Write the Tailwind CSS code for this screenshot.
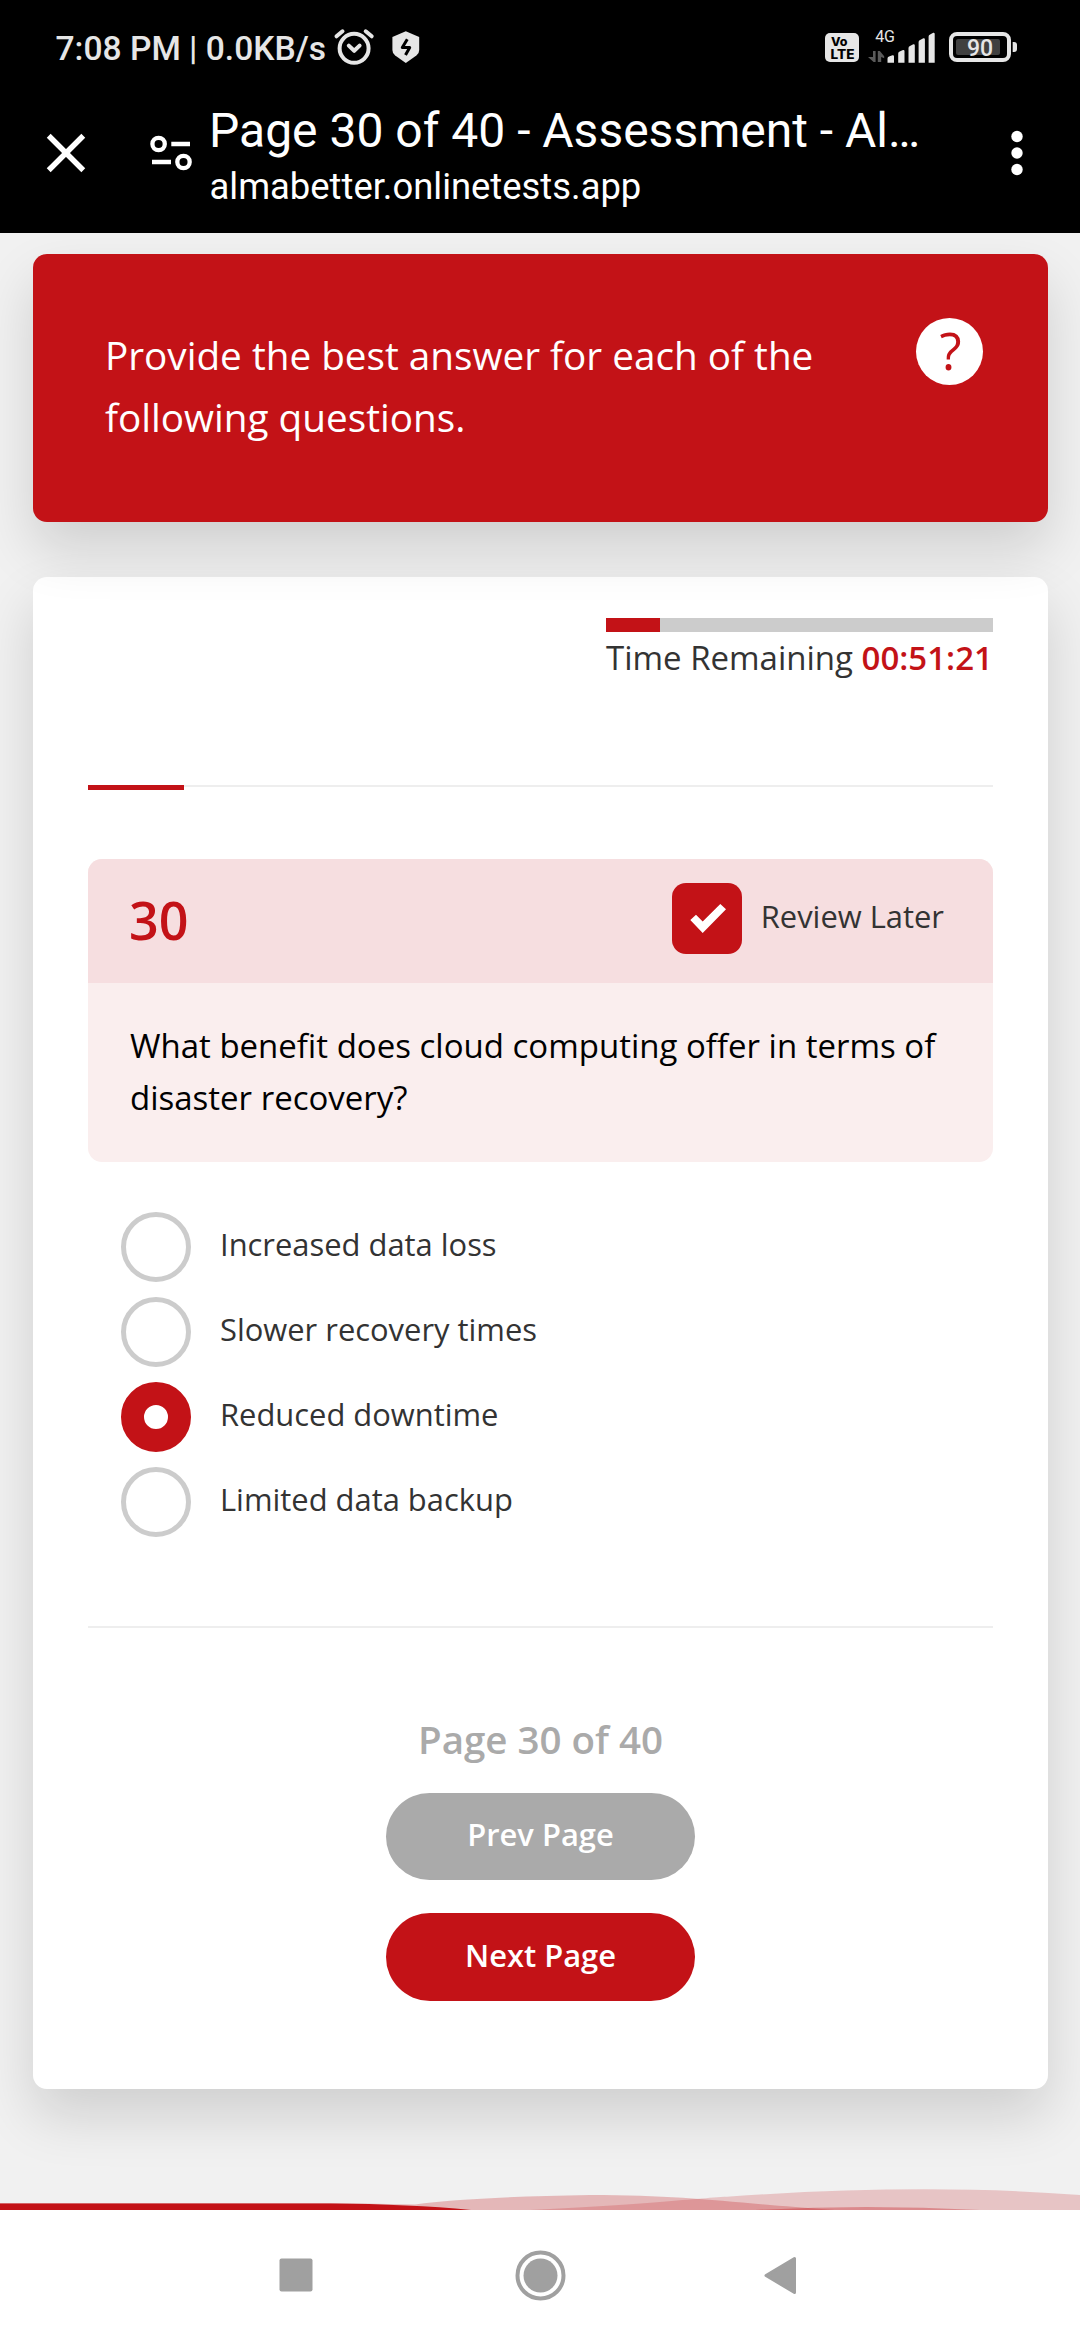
<!DOCTYPE html>
<html lang="en">
<head>
<meta charset="utf-8">
<title>Page 30 of 40 - Assessment</title>
<script src="https://cdn.jsdelivr.net/npm/@tailwindcss/browser@4"></script>
</head>
<body class="w-[1080px] h-[2340px] overflow-hidden flex flex-col bg-[#f1f1f1] font-['Open_Sans',sans-serif] text-[#333]">

<header class="relative z-20 shrink-0 h-[233px] bg-black text-white font-['Roboto',sans-serif]">
  <!-- status bar -->
  <div class="h-[97px] flex items-start justify-between pl-[55.5px] pr-[63px] text-[#e6e6e6]">
    <div class="flex items-start">
      <span class="w-[277px] text-[33.6px] leading-[97px] font-medium whitespace-nowrap">7:08 PM | 0.0KB/s</span>
      <svg class="mt-[28px]" width="42" height="40" viewBox="332.5 28 42 40" fill="none" stroke="#e6e6e6" stroke-width="4" stroke-linecap="round" stroke-linejoin="round">
        <circle cx="353.6" cy="48.3" r="14.5"/>
        <path d="M348.3 45.6l5.4 5.2 5.4-5.2M336 36.3l6-5M371.2 36.3l-6-5"/>
      </svg>
      <svg class="mt-[28px] ml-[16px]" width="30" height="38" viewBox="390.5 28 30 38">
        <path d="M405.3 31.3l13.4 5.7v13q0 3.6-2.8 5.6l-10.6 7.4-10.6-7.4q-2.8-2-2.8-5.6V37z" fill="#e6e6e6"/>
        <path d="M406.8 39.2l-5 8.3h7.4l-4.2 7.6" fill="none" stroke="#000" stroke-width="3" stroke-linejoin="round"/>
      </svg>
    </div>
    <div class="flex items-start">
      <svg class="mt-[28px]" width="34" height="38" viewBox="825 28 34 38">
        <rect x="825" y="33" width="34" height="29" rx="5" fill="#e6e6e6"/>
        <text x="831" y="45.7" font-family="Inter" font-weight="800" font-size="12" textLength="16.5" lengthAdjust="spacingAndGlyphs">Vo</text>
        <text x="830.5" y="58.8" font-family="Inter" font-weight="800" font-size="13" textLength="24" lengthAdjust="spacingAndGlyphs">LTE</text>
      </svg>
      <svg class="mt-[28px] ml-[9px]" width="68" height="38" viewBox="868 28 68 38" fill="#e6e6e6">
        <text x="875.3" y="41.8" font-size="16" textLength="19.5">4G</text>
        <path d="M873 51h2.6v11h-2L868 57h5zM877.8 62V51h2l4.4 5.2v2l-3-1.2V62z" fill="#5a5a5a"/>
        <path d="M887.5 62.7V58.5q0-1.5 1.5-2l3.5-1.3q1.5-.3 1.5 1.3v6.200zM898.200 62.700V53.500q0-1.500 1.500-2l3.300-1.500q1.500-.3 1.500 1.300v11.400zM908.500 62.700V48q0-1.500 1.500-2l3.300-1.700q1.500-.3 1.500 1.300v17.100zM918.600 62.700V42q0-1.500 1.500-2l3.300-1.700q1.500-.3 1.500 1.300v23.100zM928.600 62.700V36.500q0-1.500 1.500-2l3.100-1.700q1.500-.3 1.500 1.300v28.600z"/>
      </svg>
      <svg class="mt-[28px] ml-[13px]" width="68" height="38" viewBox="949 28 68 38">
        <rect x="951" y="34" width="58" height="26" rx="6" fill="none" stroke="#e6e6e6" stroke-width="4"/>
        <rect x="956" y="39" width="44" height="16" rx="2" fill="#404040"/>
        <path d="M1012.700 42h1.300q3 0 3 3v4q0 3-3 3h-1.300z" fill="#e6e6e6"/>
        <text x="967" y="56" font-size="23" font-weight="500" fill="#e6e6e6" textLength="26">90</text>
      </svg>
    </div>
  </div>
  <!-- browser toolbar -->
  <div class="flex items-start pt-[6px]">
    <svg class="mt-[30px] ml-[46px]" width="40" height="40" viewBox="46 133 40 40" stroke="#fff" stroke-width="5.500"><path d="M48.700 135.700l34.600 34.600M83.300 135.700l-34.600 34.600"/></svg>
    <svg class="mt-[30px] ml-[64px]" width="43" height="40" viewBox="150 133 43 40" fill="none" stroke="#fff" stroke-width="4.300">
      <circle cx="158.600" cy="144" r="6.200"/><circle cx="183.500" cy="162" r="6.200"/>
      <path d="M171.300 144H190M152 162h19"/>
    </svg>
    <div class="ml-[16px] w-[800px]">
      <div class="text-[48px] leading-[56px] whitespace-nowrap">Page 30 of 40 - Assessment - Al…</div>
      <div class="mt-[7px] ml-[0.5px] text-[36.400px] leading-[42px]">almabetter.onlinetests.app</div>
    </div>
    <svg class="mt-[26px] ml-[2px]" width="12" height="48" viewBox="0 0 12 48" fill="#fff"><circle cx="6" cy="7.500" r="5.700"/><circle cx="6" cy="24" r="5.700"/><circle cx="6" cy="40.500" r="5.700"/></svg>
  </div>
</header>

<main class="relative shrink-0 h-[1977px] overflow-hidden px-[33px] pt-[21px]">
  <section class="relative z-10 w-[1015px] h-[268px] rounded-[14px] bg-[#c31217] text-white flex items-start justify-between pl-[72px] pr-[65px] shadow-[0_27px_55px_rgba(0,0,0,0.14)]">
    <p class="mt-[70px] w-[740px] text-[38.700px] leading-[62px]">Provide the best answer for each of the following questions.</p>
    <div class="mt-[64px] size-[67px] rounded-full bg-white text-[#c31217] text-center text-[51px] leading-[64px] pl-[2px]">?</div>
  </section>

  <section class="mt-[55px] w-[1015px] h-[1512px] rounded-[14px] bg-white px-[55px] shadow-[0_27px_55px_rgba(0,0,0,0.14)] flex flex-col">
    <div class="self-end mt-[41px] w-[387px]">
      <div class="h-[14px] bg-[#ccc]"><div class="h-full w-[54px] bg-[#c31217]"></div></div>
      <div class="mt-[3px] text-[33px] leading-[45px] whitespace-nowrap">Time Remaining <span class="font-semibold text-[#c31217]">00:51:21</span></div>
    </div>
    <div class="mt-[105px] h-[5px]">
      <div class="h-[2px] bg-[#eee]"><div class="h-[5px] w-[96px] bg-[#c31217]"></div></div>
    </div>

    <div class="mt-[69px] h-[303px] rounded-[14px] overflow-hidden bg-[#faeeee]">
      <div class="h-[124px] bg-[#f6dee0] flex items-start justify-between pl-[41px] pr-[49px]">
        <div class="mt-[31px] text-[52px] leading-[60px] font-semibold text-[#c31217]">30</div>
        <div class="mt-[24px] flex items-start">
          <div class="w-[70px] h-[71px] rounded-[14px] bg-[#c31217]">
            <svg width="70" height="71" viewBox="0 0 70 71"><path d="M18.300 37l5.700-5.200 6.700 6.700L48.300 21l5.700 5.300L30.700 50z" fill="#fff"/></svg>
          </div>
          <span class="ml-[19px] text-[30.900px] leading-[66px]">Review Later</span>
        </div>
      </div>
      <p class="pt-[37px] pl-[42px] w-[870px] text-[33px] leading-[52px] text-black">What benefit does cloud computing offer in terms of disaster recovery?</p>
    </div>

    <div class="mt-[50px] pl-[33px] flex flex-col gap-[15px] text-[30.900px] leading-[64px]">
      <label class="h-[70px] flex items-start gap-[29px]"><span class="size-[70px] rounded-full border-[5px] border-[#ccc]"></span>Increased data loss</label>
      <label class="h-[70px] flex items-start gap-[29px]"><span class="size-[70px] rounded-full border-[5px] border-[#ccc]"></span>Slower recovery times</label>
      <label class="h-[70px] flex items-start gap-[29px]"><span class="size-[70px] rounded-full border-[23px] border-[#c31217] bg-white bg-clip-padding"></span>Reduced downtime</label>
      <label class="h-[70px] flex items-start gap-[29px]"><span class="size-[70px] rounded-full border-[5px] border-[#ccc]"></span>Limited data backup</label>
    </div>

    <div class="mt-[89px] h-[2px] bg-[#eee]"></div>

    <div class="mt-[85px] flex flex-col items-center font-semibold">
      <div class="text-[38.500px] leading-[52px] text-[#aaa]">Page 30 of 40</div>
      <button class="mt-[28px] w-[309px] h-[87px] rounded-full bg-[#aaa] text-white text-[30.900px] leading-[82px] flex items-start justify-center">Prev Page</button>
      <button class="mt-[33px] w-[309px] h-[88px] rounded-full bg-[#c31217] text-white text-[30.900px] leading-[84px] flex items-start justify-center">Next Page</button>
    </div>
  </section>

  <!-- footer waves -->
  <svg class="absolute left-0 bottom-0" width="1080" height="30" viewBox="0 2180 1080 30" fill="#c31217">
    <path fill-opacity=".26" d="M0 2210V2203H335L415 2204.500Q470 2197 590 2195C690 2195 730 2203 835 2210z"/>
    <path fill-opacity=".2" d="M530 2210C640 2205 700 2198 730 2196.500Q925 2183 1080 2195V2210z"/>
    <path fill-opacity=".33" d="M755 2210Q865 2204 980 2210z"/>
    <path d="M0 2210V2203.500H330Q410 2204 471 2210z"/>
  </svg>
</main>

<nav class="relative grow bg-white">
  <svg width="1080" height="130" viewBox="0 2210 1080 130" fill="#a0a0a0">
    <rect x="279.500" y="2258.500" width="33" height="33" rx="2"/>
    <circle cx="540.500" cy="2275.500" r="17"/>
    <circle cx="540.500" cy="2275.500" r="23" fill="none" stroke="#a0a0a0" stroke-width="4"/>
    <path d="M766 2275.500L794.500 2258.500V2292.500z" stroke="#a0a0a0" stroke-width="3" stroke-linejoin="round"/>
  </svg>
</nav>
</body>
</html>
